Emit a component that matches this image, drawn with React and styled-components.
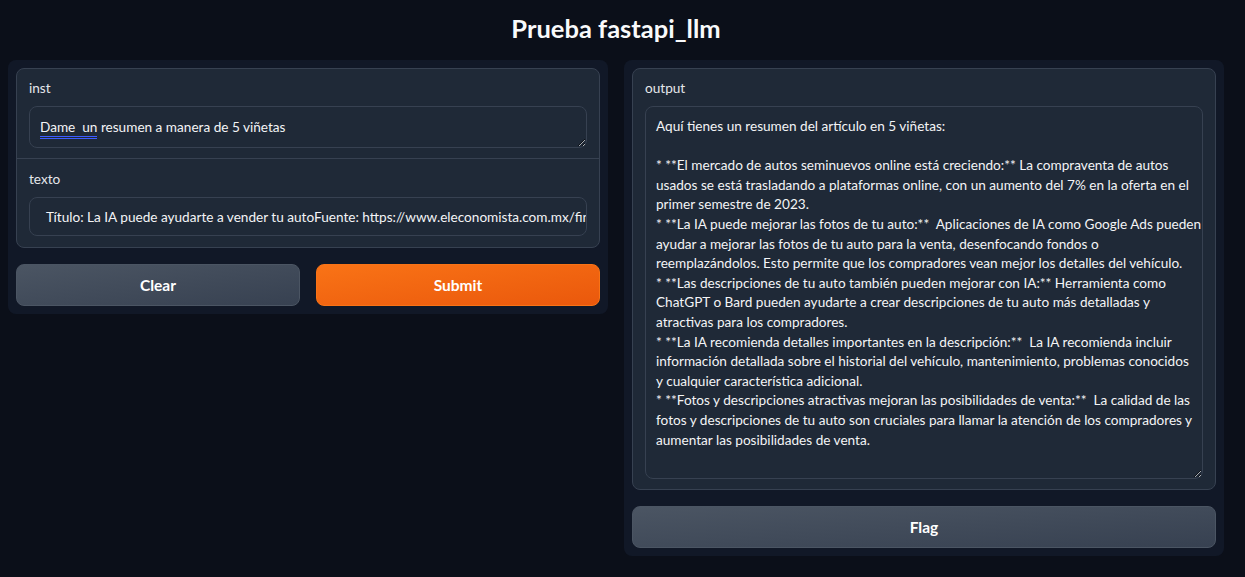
import React from 'react';
import styled, { createGlobalStyle } from 'styled-components';

const GlobalStyle = createGlobalStyle`
  html, body {
    margin: 0;
    padding: 0;
    background: #0b0f19;
  }
  body {
    font-family: Lato, "Open Sans", sans-serif;
    color: #f3f4f6;
  }
  * { box-sizing: border-box; }
`

const Page = styled.div`
  width: 1245px;
  min-height: 577px;
  padding: 0 21px 0 8px;
`
const Title = styled.h1`
  margin: 0;
  height: 60px;
  display: flex;
  align-items: center;
  justify-content: center;
  padding-bottom: 4px;
  font-size: 25.5px;
  font-weight: 700;
  color: #f9fafb;
`
const Columns = styled.div`
  display: flex;
  gap: 16px;
  align-items: flex-start;
`
const Panel = styled.div`
  flex: 1 1 0;
  min-width: 0;
  background: #111827;
  border-radius: 8px;
  padding: 8px;
  display: flex;
  flex-direction: column;
  gap: 16px;
`
const Block = styled.div`
  background: #1f2937;
  border: 1px solid #374151;
  border-radius: 8px;
  overflow: hidden;
`
const Field = styled.div`
  padding: ${p => p.$pad || '9px 12px 10px'};
  & + & {
    border-top: 1px solid #374151;
  }
`
const Label = styled.div`
  font-size: 13.6px;
  line-height: 20px;
  color: #e5e7eb;
  margin-bottom: 8px;
`
const Area = styled.div`
  background: #1f2937;
  border: 1px solid #374151;
  border-radius: 8px;
  padding: 10px 10px;
  height: ${p => p.$h}px;
  font-size: 13.6px;
  line-height: ${p => p.$lh || 20}px;
  color: #f3f4f6;
  resize: vertical;
  overflow: hidden;
  white-space: pre;
`
const Input = styled.div`
  background: #1f2937;
  border: 1px solid #374151;
  border-radius: 8px;
  height: 39px;
  padding: 0 14px 0 16px;
  display: flex;
  align-items: center;
  font-size: 13.6px;
  color: #f3f4f6;
  white-space: nowrap;
  overflow: hidden;
`
const Marked = styled.span`
  border-bottom: 3px double #3d5cff;
  padding-bottom: 1px;
`
const Line = styled.div`
  height: 19.6px;
`
const Buttons = styled.div`
  display: flex;
  gap: 16px;
`
const Button = styled.button`
  flex: 1 1 0;
  height: 42px;
  border-radius: 8px;
  border: 1px solid ${p => (p.$primary ? '#f97316' : '#4b5563')};
  background: ${p =>
    p.$primary
      ? 'linear-gradient(to bottom right, #f97316, #ea580c)'
      : 'linear-gradient(to bottom right, #4b5563, #374151)'};
  color: #ffffff;
  font-family: inherit;
  font-size: 15.5px;
  font-weight: 700;
  cursor: pointer;
`

const outputLines = [
  'Aquí tienes un resumen del artículo en 5 viñetas:',
  '',
  '* **El mercado de autos seminuevos online está creciendo:** La compraventa de autos',
  'usados se está trasladando a plataformas online, con un aumento del 7% en la oferta en el',
  'primer semestre de 2023.',
  '* **La IA puede mejorar las fotos de tu auto:**  Aplicaciones de IA como Google Ads pueden',
  'ayudar a mejorar las fotos de tu auto para la venta, desenfocando fondos o',
  'reemplazándolos. Esto permite que los compradores vean mejor los detalles del vehículo.',
  '* **Las descripciones de tu auto también pueden mejorar con IA:** Herramienta como',
  'ChatGPT o Bard pueden ayudarte a crear descripciones de tu auto más detalladas y',
  'atractivas para los compradores.',
  '* **La IA recomienda detalles importantes en la descripción:**  La IA recomienda incluir',
  'información detallada sobre el historial del vehículo, mantenimiento, problemas conocidos',
  'y cualquier característica adicional.',
  '* **Fotos y descripciones atractivas mejoran las posibilidades de venta:**  La calidad de las',
  'fotos y descripciones de tu auto son cruciales para llamar la atención de los compradores y',
  'aumentar las posibilidades de venta.',
]

export default function App() {
  return (
    <Page>
      <GlobalStyle />
      <Title>Prueba fastapi_llm</Title>
      <Columns>
        <Panel>
          <Block>
            <Field>
              <Label>inst</Label>
              <Area $h={42}>
                <Marked>Dame  un</Marked> resumen a manera de 5 viñetas
              </Area>
            </Field>
            <Field $pad="10px 12px 11px">
              <Label>texto</Label>
              <Input>
                Título: La IA puede ayudarte a vender tu autoFuente: https://www.eleconomista.com.mx/finanzas-personales/la-ia-puede-ayudarte
              </Input>
            </Field>
          </Block>
          <Buttons>
            <Button>Clear</Button>
            <Button $primary>Submit</Button>
          </Buttons>
        </Panel>
        <Panel>
          <Block>
            <Field>
              <Label>output</Label>
              <Area $h={373} $lh={19.6}>
                {outputLines.map((l, i) => (
                  <Line key={i}>{l}</Line>
                ))}
              </Area>
            </Field>
          </Block>
          <Buttons>
            <Button>Flag</Button>
          </Buttons>
        </Panel>
      </Columns>
    </Page>
  );
}
